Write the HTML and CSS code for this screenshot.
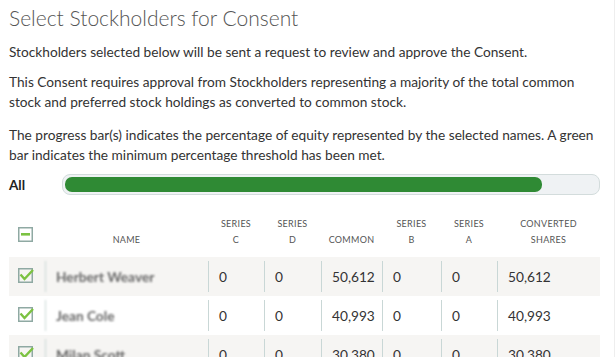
FILE: index.html
```html
<!DOCTYPE html>
<html>
<head>
<meta charset="utf-8">
<link rel="stylesheet" href="styles.css">
</head>
<body>
<div class="page">
  <h1 class="title">Select Stockholders for Consent</h1>
  <p class="text">Stockholders selected below will be sent a request to review and approve the Consent.</p>
  <p class="text">This Consent requires approval from Stockholders representing a majority of the total common stock and preferred stock holdings as converted to common stock.</p>
  <p class="text text-last">The progress bar(s) indicates the percentage of equity represented by the selected names. A green bar indicates the minimum percentage threshold has been met.</p>
  <div class="progress-row">
    <span class="progress-label">All</span>
    <div class="progress"><div class="progress-fill" style="width: 89.7%"></div></div>
  </div>
  <table class="grid">
    <colgroup>
      <col class="c-check"><col class="c-name"><col class="c-c"><col class="c-d"><col class="c-common"><col class="c-b"><col class="c-a"><col class="c-conv">
    </colgroup>
    <thead>
      <tr>
        <th class="th-check"><span class="box"><svg width="15" height="15" viewBox="0 0 15 15"><rect x="0.75" y="0.75" width="13.5" height="13.5" fill="none" stroke="#8fa9a3" stroke-width="1.5"/><rect x="3" y="6" width="9" height="2.6" fill="#7cc242"/></svg></span></th>
        <th>NAME</th>
        <th>SERIES<br>C</th>
        <th>SERIES<br>D</th>
        <th>COMMON</th>
        <th>SERIES<br>B</th>
        <th>SERIES<br>A</th>
        <th>CONVERTED<br>SHARES</th>
      </tr>
    </thead>
    <tbody>
      <tr class="odd">
        <td class="td-check"><span class="box"><svg width="17" height="17" viewBox="0 0 17 17"><rect x="0.75" y="1.75" width="13.5" height="13.5" fill="none" stroke="#8fa9a3" stroke-width="1.5"/><path d="M2.5 7.5 L6.5 12 L15 3" fill="none" stroke="#7cc242" stroke-width="2.4" stroke-linejoin="miter"/></svg></span></td>
        <td><div class="cell name">Herbert Weaver</div></td>
        <td><div class="cell">0</div></td>
        <td><div class="cell">0</div></td>
        <td><div class="cell">50,612</div></td>
        <td><div class="cell">0</div></td>
        <td><div class="cell">0</div></td>
        <td><div class="cell">50,612</div></td>
      </tr>
      <tr>
        <td class="td-check"><span class="box"><svg width="17" height="17" viewBox="0 0 17 17"><rect x="0.75" y="1.75" width="13.5" height="13.5" fill="none" stroke="#8fa9a3" stroke-width="1.5"/><path d="M2.5 7.5 L6.5 12 L15 3" fill="none" stroke="#7cc242" stroke-width="2.4" stroke-linejoin="miter"/></svg></span></td>
        <td><div class="cell name">Jean Cole</div></td>
        <td><div class="cell">0</div></td>
        <td><div class="cell">0</div></td>
        <td><div class="cell">40,993</div></td>
        <td><div class="cell">0</div></td>
        <td><div class="cell">0</div></td>
        <td><div class="cell">40,993</div></td>
      </tr>
      <tr class="odd">
        <td class="td-check"><span class="box"><svg width="17" height="17" viewBox="0 0 17 17"><rect x="0.75" y="1.75" width="13.5" height="13.5" fill="none" stroke="#8fa9a3" stroke-width="1.5"/><path d="M2.5 7.5 L6.5 12 L15 3" fill="none" stroke="#7cc242" stroke-width="2.4" stroke-linejoin="miter"/></svg></span></td>
        <td><div class="cell name">Milan Scott</div></td>
        <td><div class="cell">0</div></td>
        <td><div class="cell">0</div></td>
        <td><div class="cell">30,380</div></td>
        <td><div class="cell">0</div></td>
        <td><div class="cell">0</div></td>
        <td><div class="cell">30,380</div></td>
      </tr>
    </tbody>
  </table>
</div>
</body>
</html>
```
FILE: styles.css
```css
html, body {
  margin: 0;
  padding: 0;
  background: #fff;
  overflow: hidden;
}
body {
  font-family: Lato, "Open Sans", sans-serif;
  color: #333;
}
.page {
  width: 591px;
  height: 357px;
  padding: 0 14px 0 9px;
  border-right: 1px solid #eeeeee;
  overflow: hidden;
}
.title {
  margin: 0;
  padding-top: 4px;
  font-size: 21px;
  line-height: 28px;
  font-weight: 300;
  color: #555;
}
.text {
  margin: 10px 0 0;
  font-size: 13.7px;
  line-height: 20px;
  color: #333;
}
.text.text-last {
  margin-top: 13px;
}
.progress-row {
  display: flex;
  align-items: center;
  margin-top: 9px;
}
.progress-label {
  width: 53px;
  font-weight: 700;
  font-size: 13.5px;
  color: #222;
}
.progress {
  flex: 1;
  height: 21px;
  box-sizing: border-box;
  border: 1px solid #d3dcdc;
  border-radius: 8px;
  background: #eff2f4;
  padding: 2px;
}
.progress-fill {
  height: 100%;
  background: #2f8a34;
  border-radius: 7px;
}
.grid {
  width: 591px;
  border-collapse: collapse;
  table-layout: fixed;
  margin-top: 21px;
}
.c-check { width: 36px; }
.c-name { width: 163px; }
.c-c { width: 56px; }
.c-d { width: 57px; }
.c-common { width: 61px; }
.c-b { width: 59px; }
.c-a { width: 56px; }
.c-conv { width: 103px; }
.grid th {
  font-weight: 400;
  font-size: 9px;
  line-height: 16px;
  letter-spacing: 0.3px;
  color: #555;
  text-align: center;
  vertical-align: bottom;
  padding: 0 0 9px;
}
.grid th.th-check {
  padding-bottom: 10px;
}
.box {
  display: inline-flex;
}
.th-check .box {
  margin-left: 9px;
}
.grid th.th-check, .grid td.td-check {
  text-align: left;
}
.grid tbody tr {
  height: 39px;
}
.grid tbody tr.odd {
  background: #f6f5f3;
}
.grid td {
  padding: 4px 0;
  vertical-align: middle;
}
.td-check .box {
  margin-left: 9px;
  margin-top: 1px;
}
.cell {
  height: 31px;
  border-left: 1px solid #c9d7d6;
  padding-left: 10px;
  display: flex;
  align-items: center;
  font-size: 13.7px;
  color: #333;
}
.cell.name {
  color: #666;
  font-weight: 700;
  filter: blur(1px);
}
```
